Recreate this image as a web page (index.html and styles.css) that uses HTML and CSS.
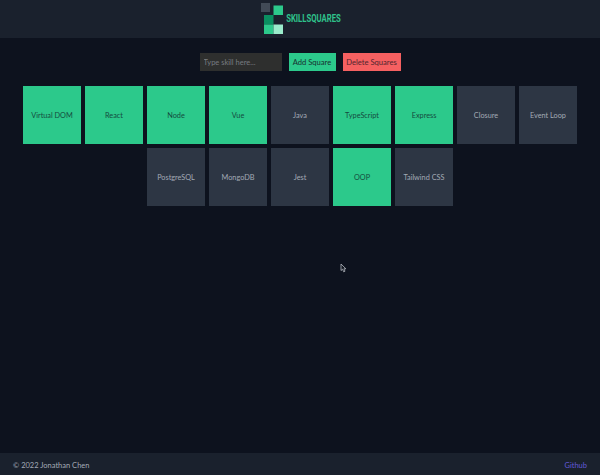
FILE: index.html
```html
<!DOCTYPE html>
<html lang="en">
<head>
<meta charset="utf-8">
<title>SkillSquares</title>
<link rel="stylesheet" href="styles.css">
</head>
<body>
<header class="header">
  <svg class="logo" width="90" height="34" viewBox="0 0 90 34" role="img" aria-label="SkillSquares">
    <rect x="1" y="1" width="9" height="9" fill="#414a56"/>
    <rect x="13.5" y="3.5" width="9.5" height="9.5" fill="#2cc98b"/>
    <rect x="4" y="13" width="9.5" height="9.5" fill="#0a8f60"/>
    <rect x="4" y="22.5" width="9.5" height="9.5" fill="#2cc98b"/>
    <rect x="13.5" y="22.5" width="9.5" height="9.5" fill="#9aeccb"/>
    <text class="logo-text" x="26.2" y="20.1" textLength="54.6" lengthAdjust="spacingAndGlyphs">SKILLSQUARES</text>
  </svg>
</header>
<main class="main">
  <form class="controls">
    <input class="skill-input" type="text" placeholder="Type skill here...">
    <button class="button add" type="button">Add Square</button>
    <button class="button delete" type="button">Delete Squares</button>
  </form>
  <section class="squares">
    <div class="square known">Virtual DOM</div>
    <div class="square known">React</div>
    <div class="square known">Node</div>
    <div class="square known">Vue</div>
    <div class="square">Java</div>
    <div class="square known">TypeScript</div>
    <div class="square known">Express</div>
    <div class="square">Closure</div>
    <div class="square">Event Loop</div>
    <div class="square">PostgreSQL</div>
    <div class="square">MongoDB</div>
    <div class="square">Jest</div>
    <div class="square known">OOP</div>
    <div class="square">Tailwind CSS</div>
  </section>
</main>
<footer class="footer">
  <span>© 2022 Jonathan Chen</span>
  <a class="link">Github</a>
</footer>
<svg class="cursor" width="7" height="10" viewBox="0 0 7 10">
  <path d="M1 1v6.5l1.6-1.3 1.1 2.6 1.3-.6-1.1-2.4h2z" fill="#10151f" stroke="#b5bac2" stroke-width=".8"/>
</svg>
</body>
</html>
```
FILE: styles.css
```css
* {
  box-sizing: border-box;
}

body {
  margin: 0;
  height: 475px;
  display: flex;
  flex-direction: column;
  overflow: hidden;
  background: #0d121e;
  color: #a3aab5;
  font-family: Lato, "Liberation Sans", sans-serif;
  font-size: 7.3px;
}

.header {
  height: 38px;
  flex: none;
  display: flex;
  justify-content: center;
  padding: 2px 0 0 10px;
  background: #1a212d;
}

.logo {
  overflow: visible;
}

.logo-text {
  font-family: Roboto, sans-serif;
  font-size: 10.4px;
  font-weight: 700;
  fill: #2fc18b;
}

.main {
  flex: 1;
}

.controls {
  display: flex;
  justify-content: center;
  gap: 7px;
  margin: 15px 0;
}

.skill-input,
.button {
  height: 18px;
  border: 0;
  border-radius: 0;
  font-family: inherit;
}

.skill-input {
  width: 82px;
  padding: 0 4px;
  background: #2e2f2e;
  color: #a3aab5;
  font-size: 7.5px;
  letter-spacing: 0;
}

.skill-input::placeholder {
  color: #777b80;
}

.button {
  padding: 0;
  color: #17302f;
  font-size: 7.6px;
  white-space: nowrap;
}

.add {
  width: 47px;
  background: #2cc98b;
}

.delete {
  width: 58px;
  background: #f56061;
  color: #50252e;
}

.squares {
  display: flex;
  flex-wrap: wrap;
  justify-content: center;
  gap: 4px;
  padding: 0 20px;
}

.square {
  width: 58px;
  height: 58px;
  display: flex;
  align-items: center;
  justify-content: center;
  background: #2d3644;
  white-space: nowrap;
}

.known {
  background: #2cc98b;
  color: #154b40;
}

.footer {
  height: 22px;
  flex: none;
  display: flex;
  align-items: center;
  justify-content: space-between;
  padding: 2px 13px 0;
  background: #1a212d;
  font-size: 7.5px;
}

.link {
  color: #6159d9;
}

.cursor {
  position: absolute;
  left: 340px;
  top: 263px;
}
```
